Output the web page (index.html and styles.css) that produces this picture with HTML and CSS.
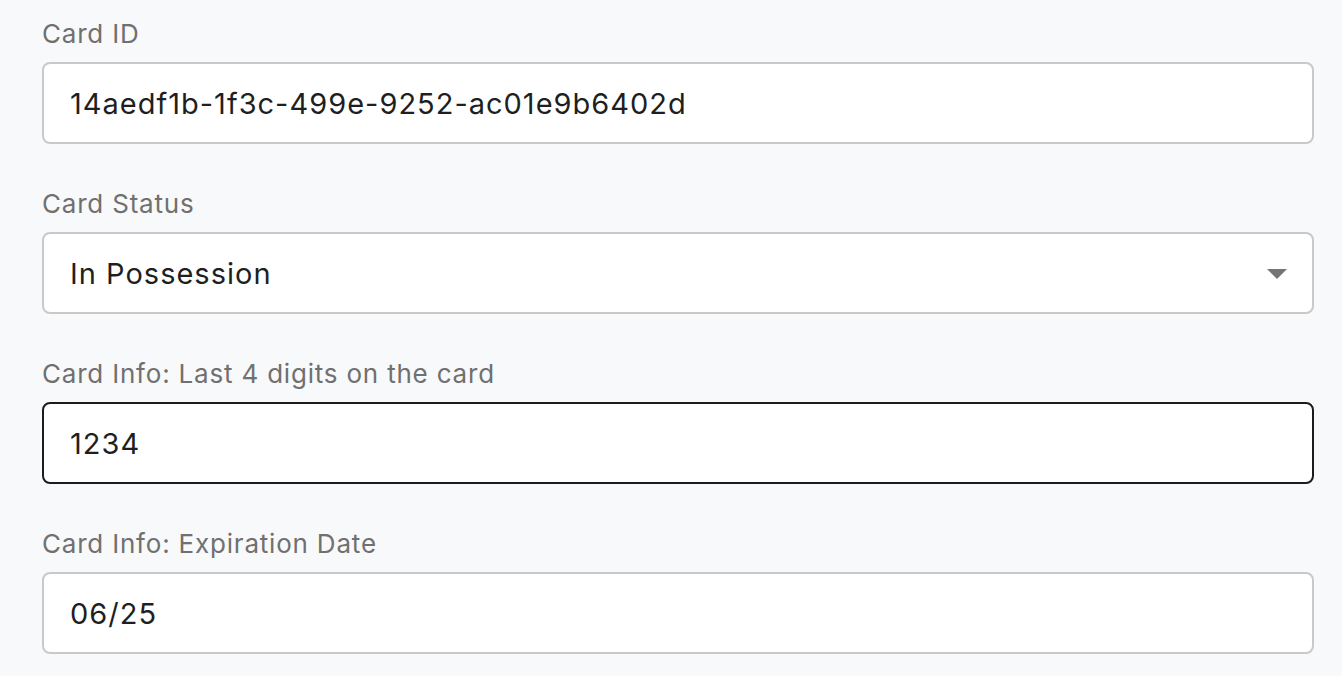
FILE: index.html
```html
<!DOCTYPE html>
<html lang="en">
<head>
<meta charset="utf-8">
<title>Card form</title>
<link rel="stylesheet" href="styles.css">
</head>
<body>
<form class="form">
  <div class="field">
    <label class="label" for="card-id">Card ID</label>
    <input class="input" id="card-id" type="text" value="14aedf1b-1f3c-499e-9252-ac01e9b6402d">
  </div>
  <div class="field">
    <label class="label" for="card-status">Card Status</label>
    <div class="select-wrap">
      <select class="input select" id="card-status">
        <option selected>In Possession</option>
        <option>Lost</option>
        <option>Stolen</option>
      </select>
      <svg class="caret" width="20" height="10" viewBox="0 0 20 10" aria-hidden="true"><path d="M0 0 L20 0 L10 10 Z" fill="#757575"/></svg>
    </div>
  </div>
  <div class="field">
    <label class="label" for="card-last4">Card Info: Last 4 digits on the card</label>
    <input class="input input-focused" id="card-last4" type="text" value="1234">
  </div>
  <div class="field">
    <label class="label" for="card-exp">Card Info: Expiration Date</label>
    <input class="input" id="card-exp" type="text" value="06/25">
  </div>
</form>
</body>
</html>
```

FILE: styles.css
```css
html, body {
  margin: 0;
  padding: 0;
  background: #f8f9fa;
}

body {
  font-family: Inter, "Noto Sans", sans-serif;
  overflow: hidden;
}

.form {
  display: flex;
  flex-direction: column;
  gap: 42px;
  padding: 16px 28px 0 42px;
}

.field {
  display: flex;
  flex-direction: column;
  gap: 10px;
}

.label {
  font-size: 26px;
  letter-spacing: 0.8px;
  line-height: 36px;
  height: 36px;
  color: #707070;
  font-weight: 400;
}

.input {
  box-sizing: border-box;
  width: 100%;
  height: 82px;
  margin: 0;
  padding: 0 26px;
  border: 2px solid #c9c9c9;
  border-radius: 8px;
  background: #ffffff;
  font-family: Inter, "Noto Sans", sans-serif;
  font-size: 29px;
  letter-spacing: 1px;
  color: #1f1f1f;
  outline: none;
}

.input-focused {
  border-color: #1c1c1c;
}

.select-wrap {
  position: relative;
}

.select {
  appearance: none;
  -webkit-appearance: none;
  display: block;
}

.caret {
  position: absolute;
  right: 27px;
  top: 37px;
  pointer-events: none;
}
```
